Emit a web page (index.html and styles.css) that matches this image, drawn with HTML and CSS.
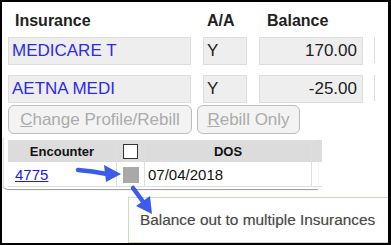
FILE: index.html
```html
<!DOCTYPE html>
<html lang="en">
<head>
  <meta charset="UTF-8" />
  <title>Insurance Balance</title>
  <link rel="stylesheet" href="styles.css">
</head>
<body>
  <div class="frame">
    <div class="row head">
      <div class="col-ins lbl">Insurance</div>
      <div class="col-aa lbl">A/A</div>
      <div class="col-bal lbl">Balance</div>
    </div>
    <div class="row fields first">
      <div class="col-ins fld name">MEDICARE T</div>
      <div class="col-aa fld">Y</div>
      <div class="col-bal fld num">170.00</div>
      <div class="fld-edge"></div>
    </div>
    <div class="row fields">
      <div class="col-ins fld name">AETNA MEDI</div>
      <div class="col-aa fld">Y</div>
      <div class="col-bal fld num">-25.00</div>
      <div class="fld-edge"></div>
    </div>

    <div class="btns">
      <button class="btn btn-wide" disabled><u>C</u>hange Profile/Rebill</button>
      <button class="btn btn-small" disabled><u>R</u>ebill Only</button>
    </div>

    <div class="enc-panel">
      <table class="enc">
        <thead>
          <tr>
            <th class="c-enc">Encounter</th>
            <th class="c-chk"><span class="box"></span></th>
            <th class="c-dos">DOS</th>
            <th class="c-end"></th>
          </tr>
        </thead>
        <tbody>
          <tr>
            <td class="c-enc"><a href="#">4775</a></td>
            <td class="c-chk"><span class="box box-off"></span></td>
            <td class="c-dos">07/04/2018</td>
            <td class="c-end"></td>
          </tr>
        </tbody>
      </table>
    </div>

    <div class="tip">Balance out to multiple Insurances</div>

    <!-- callout arrows, drawn over the tooltip -->
    <svg class="arrows" width="391" height="245" viewBox="0 0 391 245">
      <path d="M78 170 Q92 171 107 174" fill="none" stroke="#3b5bea" stroke-width="4.5" stroke-linecap="round"/>
      <polygon points="104,165 121,174 106,182" fill="#3b5bea"/>
      <path d="M133 188 L144 203" fill="none" stroke="#3b5bea" stroke-width="4.5" stroke-linecap="round"/>
      <polygon points="136,206 150,196 152,214" fill="#3b5bea"/>
    </svg>
  </div>
</body>
</html>
```

FILE: styles.css
```css
body {
  margin: 0;
  background: #fff;
  font-family: "Liberation Sans", Arial, sans-serif;
}
.frame {
  position: relative;
  width: 391px;
  height: 245px;
  box-sizing: border-box;
  border-style: solid;
  border-color: #000;
  border-width: 2px 3px 2px 2px;
  overflow: hidden;
  background: #fff;
}

.row {
  display: flex;
  gap: 12px;
  margin-left: 6px;
}
.col-ins { width: 183px; }
.col-aa { width: 44px; }
.col-bal { width: 104px; }

.head { padding-top: 9px; }
.lbl {
  font-weight: bold;
  font-size: 16px;
  line-height: 20px;
  color: #222;
}
.head .col-ins { padding-left: 7px; box-sizing: border-box; }
.head .col-aa { padding-left: 4px; box-sizing: border-box; }
.head .col-bal { padding-left: 8px; box-sizing: border-box; }

.fields { margin-top: 10px; }
.fields.first { margin-top: 6px; }
.fld {
  height: 28px;
  box-sizing: border-box;
  background: #eeeeee;
  border: 1px solid #dddddd;
  font-size: 17px;
  line-height: 26px;
  padding: 0 3px;
  color: #1e1e1e;
  white-space: nowrap;
  overflow: hidden;
}
.fld.name { color: #2b2bef; }
.fld.num { text-align: right; padding-right: 5px; }
.fld-edge {
  width: 8px;
  height: 26px;
  border-left: 1px solid #dddddd;
  margin-left: -1px;
}

.btns {
  display: flex;
  gap: 5px;
  margin: 2px 0 0 6px;
}
.btn {
  height: 29px;
  box-sizing: border-box;
  background: #f3f3f3;
  border: 1px solid #bdbdbd;
  border-radius: 6px;
  font-family: "Liberation Sans", Arial, sans-serif;
  font-size: 17px;
  color: #ababab;
  padding: 0;
}
.btn-wide { width: 184px; }
.btn-small { width: 103px; }

.enc-panel {
  width: 315px;
  margin: 3px 0 0 1px;
  padding: 3px 0 2px 4px;
  box-sizing: border-box;
  border-left: 1px solid #e4e4e4;
  border-bottom-left-radius: 5px;
  box-shadow: 0 1px 1px #9a9a9a;
}
.enc {
  border-collapse: collapse;
  table-layout: fixed;
  width: 311px;
}
.enc th, .enc td {
  padding: 0;
  border-left: 1px solid #dedede;
}
.enc th:first-child, .enc td:first-child { border-left: none; }
.enc th {
  background: #dcdcdc;
  height: 22px;
  font-size: 13px;
  font-weight: bold;
  color: #111;
  text-align: center;
}
.enc td {
  height: 24px;
  border-bottom: 1px solid #dedede;
  font-size: 15px;
  color: #111;
}
.c-enc { width: 108px; }
.c-chk { width: 27px; }
.c-dos { width: 166px; }
.c-end { width: 10px; }
.enc td.c-enc { padding-left: 7px; }
.enc td.c-dos { padding-left: 3px; }
.enc td.c-chk { text-align: center; }
.enc a { color: #1a1aee; }

.box {
  display: inline-block;
  width: 15px;
  height: 15px;
  box-sizing: border-box;
  border: 1px solid #333;
  background: #fff;
  vertical-align: middle;
}
.box-off {
  width: 16px;
  height: 16px;
  border: none;
  background: #a9a9a9;
}

.arrows {
  position: absolute;
  left: -2px;
  top: -2px;
}

.tip {
  position: absolute;
  left: 126px;
  top: 195px;
  width: 264px;
  height: 46px;
  box-sizing: border-box;
  border: 1px solid #c4e0b6;
  background: #fff;
  padding-left: 11px;
  font-size: 15.4px;
  line-height: 44px;
  color: #4a4a4a;
  text-shadow: 0 0 1px rgba(0, 0, 0, 0.25);
}
```
